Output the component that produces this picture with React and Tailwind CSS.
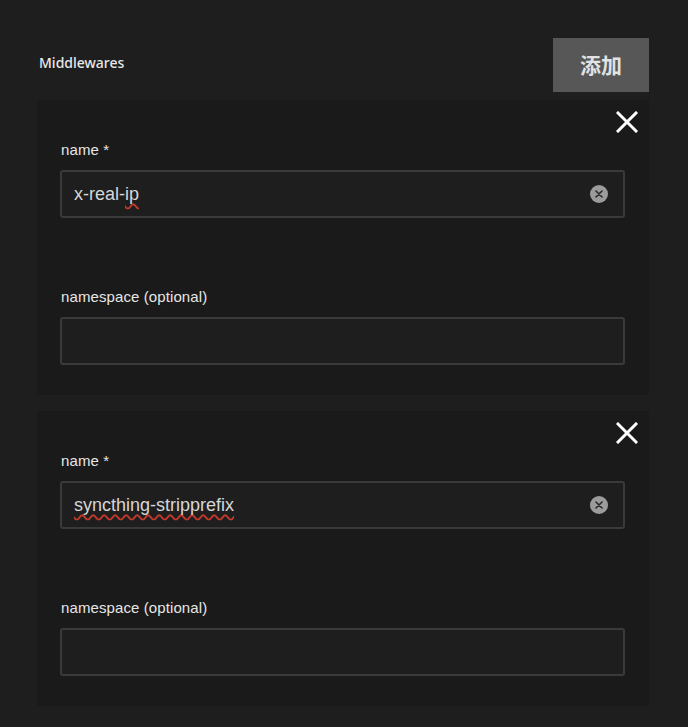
import React from 'react';

const ClearIcon = () => (
  <span className="flex h-[18px] w-[18px] items-center justify-center rounded-full bg-[#9b9b9b]">
    <svg width="8" height="8" viewBox="0 0 8 8">
      <path d="M1 1L7 7M7 1L1 7" stroke="#2a2a2a" strokeWidth="1.6" strokeLinecap="round" />
    </svg>
  </span>
);

const CloseIcon = () => (
  <svg width="22" height="22" viewBox="0 0 22 22">
    <path d="M2 2L20 20M20 2L2 20" stroke="#ffffff" strokeWidth="3" strokeLinecap="square" />
  </svg>
);

const Field = ({ label, children, clearable }) => (
  <div>
    <div className="mb-[10px] pl-px text-[15px] leading-5 tracking-[0.1px] text-[#e6e6e6]">{label}</div>
    <div className="flex h-12 items-center rounded-[3px] border-2 border-[#3a3a3a] bg-[#1e1e1e] pl-3 pr-[15px]">
      <div className="flex-1 text-[18px] text-[#d6d6d6]">{children}</div>
      {clearable && <ClearIcon />}
    </div>
  </div>
);

// spell-check style underline
const Squiggle = ({ children }) => (
  <span className="underline decoration-wavy decoration-[#c0392b] decoration-[1.5px] underline-offset-[3px] [text-decoration-skip-ink:none]">
    {children}
  </span>
);

const MiddlewareCard = ({ name }) => (
  <div className="relative bg-[#1a1a1a] pb-[30px] pl-[23px] pr-[24px] pt-10">
    <button className="absolute right-[11px] top-[11px]">
      <CloseIcon />
    </button>
    <Field label="name *" clearable>
      {name}
    </Field>
    <div className="mt-[69px]">
      <Field label="namespace (optional)" />
    </div>
  </div>
);

export default function App() {
  return (
    <div className="min-h-screen bg-[#1e1e1e] px-[39px] pt-[38px] font-['Liberation_Sans',Arial,sans-serif]">
      <div className="flex items-center justify-between">
        <span className="mb-[6px] font-['Noto_Sans',sans-serif] text-[14px] font-medium text-[#e8e8e8]">Middlewares</span>
        <button className="h-[54px] w-[96px] bg-[#575757] font-['Noto_Sans_CJK_SC',sans-serif] text-[21px] font-bold text-[#e2e2e2]">
          添加
        </button>
      </div>
      <div className="-ml-[2px] mt-2 flex flex-col gap-4">
        <MiddlewareCard name={<>x-real-<Squiggle>ip</Squiggle></>} />
        <MiddlewareCard name={<Squiggle>syncthing-stripprefix</Squiggle>} />
      </div>
    </div>
  );
}
